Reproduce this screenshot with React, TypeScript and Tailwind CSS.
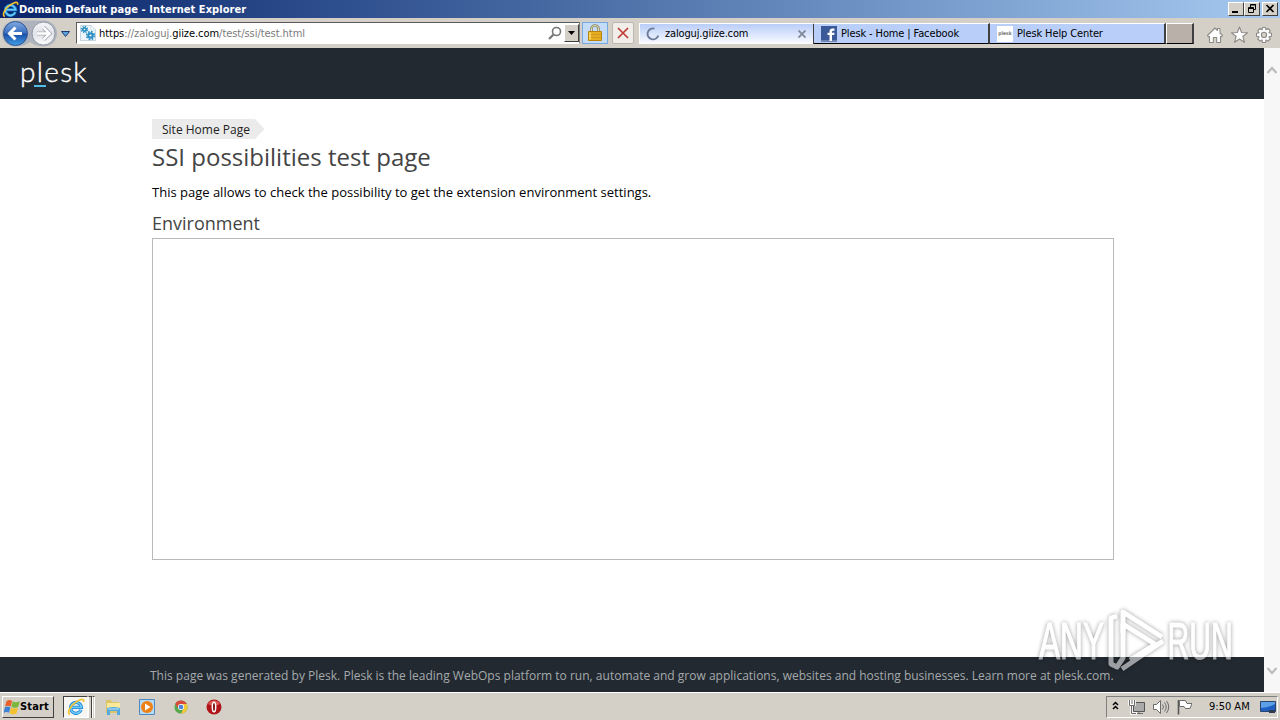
import type { ReactNode } from "react";

const TAHOMA = "font-['DejaVu_Sans_Condensed','DejaVu_Sans',sans-serif]";

function IeLogo({ className }: { className: string }) {
  return (
    <svg viewBox="0 0 20 20" className={className} aria-hidden>
      <path
        d="M15.6 13.2A6 6 0 1 1 16 10.4H5.2"
        fill="none"
        stroke="#1b86d8"
        strokeWidth="3.6"
      />
      <path
        d="M15.6 13.2A6 6 0 1 1 16 10.4H5.2"
        fill="none"
        stroke="#6cc8f5"
        strokeWidth="1.8"
      />
      <path
        d="M3.4 18.2C-.5 17 3 9.500 9 5.200S19.500 .2 18.300 4.600"
        fill="none"
        stroke="#f2c230"
        strokeWidth="1.9"
      />
    </svg>
  );
}

function NavButtons() {
  return (
    <svg width="76" height="30" viewBox="0 18 76 30" className="shrink-0" aria-hidden>
      <defs>
        <linearGradient id="back" x1="0" y1="0" x2="0" y2="1">
          <stop offset="0" stopColor="#7fa9e0" />
          <stop offset=".48" stopColor="#3a70c0" />
          <stop offset=".52" stopColor="#1c4fa8" />
          <stop offset="1" stopColor="#3f9fe8" />
        </linearGradient>
        <linearGradient id="forward" x1="0" y1="0" x2="0" y2="1">
          <stop offset="0" stopColor="#f6f7f9" />
          <stop offset=".5" stopColor="#dfe2e8" />
          <stop offset="1" stopColor="#fbfcfd" />
        </linearGradient>
      </defs>
      <path d="M15 20.500H44A13 13 0 0 1 44 46.500Q36 46.500 30 42Q24 46.500 15 46.500A13 13 0 0 1 15 20.500Z" fill="#aeb3bd" />
      <circle cx="15.500" cy="33.500" r="12" fill="url(#back)" stroke="#34568f" />
      <circle cx="43.500" cy="33.500" r="11.500" fill="url(#forward)" stroke="#9298a3" />
      <path
        d="M22 33.500H10M15.500 27.500L9.500 33.500L15.500 39.500"
        fill="none"
        stroke="#fff"
        strokeWidth="3"
      />
      <path
        d="M37 33.500H49M43.500 27.500L49.500 33.500L43.500 39.500"
        fill="none"
        stroke="#a9adb5"
        strokeWidth="4"
      />
      <path
        d="M37 33.500H48.500M43.500 27.500L49.500 33.500L43.500 39.500"
        fill="none"
        stroke="#fff"
        strokeWidth="2.400"
      />
      <path d="M61.500 31.500H69.500L65.500 36.500Z" fill="#5ba3dd" stroke="#1d3c70" />
    </svg>
  );
}

function GearsIcon() {
  return (
    <svg width="16" height="16" viewBox="0 0 16 16" className="shrink-0" aria-hidden>
      <path d="M.5 .5H11L15.500 5V15.500H.5Z" fill="#eef6fc" stroke="#c5d5e2" />
      <path d="M11 .5V5H15.500Z" fill="#fff" stroke="#c5d5e2" strokeWidth=".7" />
      <g fill="none" stroke="#2d8fc4">
        <circle cx="4.500" cy="4.500" r="1.700" strokeWidth="1.800" />
        <circle cx="4.500" cy="4.500" r="3" strokeWidth="1.400" strokeDasharray="1.3 1.056" />
        <circle cx="10.500" cy="10.500" r="2.200" strokeWidth="2.200" />
        <circle cx="10.500" cy="10.500" r="3.900" strokeWidth="1.600" strokeDasharray="1.700 1.363" />
      </g>
    </svg>
  );
}

function LockIcon() {
  return (
    <svg width="14" height="17" viewBox="0 0 14 17" aria-hidden>
      <path d="M3.500 8V4.500A3.500 3 0 0 1 10.500 4.500V8" fill="none" stroke="#8a8458" strokeWidth="2.600" />
      <path d="M3.500 8V4.500A3.500 3 0 0 1 10.500 4.500V8" fill="none" stroke="#e6e2c4" />
      <path d="M.5 7.500H13.500V16.500H.5Z" fill="#e7ae22" stroke="#b8840f" />
      <path d="M1 10.500H13M1 13.500H13" stroke="#cf9a1b" />
      <path d="M2 8.500V15.500" stroke="#ffdf70" strokeWidth="1.500" />
    </svg>
  );
}

function FacebookIcon() {
  return (
    <svg width="16" height="16" viewBox="0 0 16 16" className="shrink-0" aria-hidden>
      <path d="M0 0H16V16H0Z" fill="#3b5998" />
      <path d="M0 14H16V16H0Z" fill="#6d84b4" />
      <path
        d="M8.500 15V9H6.500V6.800H8.500V5.500Q8.500 2.500 11.500 2.500H13.500V4.800H12.200Q11 4.800 11 6V6.800H13.500L13.200 9H11V15Z"
        fill="#fff"
      />
    </svg>
  );
}

function CommandIcons() {
  return (
    <svg width="68" height="20" viewBox="1206 25 68 20" className="shrink-0" aria-hidden>
      <g fill="#fff" stroke="#8c8a86" strokeWidth="1.100" strokeLinejoin="round">
        <path d="M1207.500 35.500L1215 28L1217.500 30.500V28.500H1220V33L1222.500 35.500L1221 37L1220.500 36.500V42.500H1216.700V37.500H1213.300V42.500H1209.500V36.500L1209 37Z" />
        <path d="M1239.500 27L1241.600 32.500L1247.500 32.800L1242.900 36.500L1244.500 42.300L1239.500 39L1234.500 42.300L1236.100 36.500L1231.500 32.800L1237.400 32.500Z" />
        <path d="M1262.500 27.500H1265.500L1266 29.800L1268 28.500L1270.200 30.700L1268.900 32.700L1271.500 33.300V36.300L1268.900 36.900L1270.200 39L1268 41.200L1266 39.900L1265.500 42.500H1262.500L1262 39.900L1260 41.200L1257.800 39L1259.100 36.900L1256.500 36.300V33.300L1259.100 32.700L1257.800 30.700L1260 28.500L1262 29.800Z" />
        <circle cx="1264" cy="34.900" r="2.600" fill="#d4d0c8" />
      </g>
    </svg>
  );
}

function CaptionButton({ children }: { children: ReactNode }) {
  return (
    <div className="h-[14px] w-4 border border-t-white border-r-[#404040] border-b-[#404040] border-l-white bg-[#d4d0c8]">
      <svg width="14" height="12" viewBox="0 0 14 12" fill="none" stroke="#000" aria-hidden>
        {children}
      </svg>
    </div>
  );
}

function TitleBar() {
  return (
    <div className="flex h-[18px] items-center bg-linear-to-r from-[#0a246a] to-[#a6caf0] pr-0.5 pl-0.5">
      <IeLogo className="size-[17px] shrink-0" />
      <span className="pt-px text-[11px] leading-[17px] font-bold tracking-[0.06px] whitespace-nowrap text-white">
        Domain Default page - Internet Explorer
      </span>
      <div className="ml-auto flex">
        <CaptionButton>
          <path d="M3 9H9" strokeWidth="2" />
        </CaptionButton>
        <CaptionButton>
          <path d="M5.500 4V1.500H10.500V6.500H8.500M5 2H11" />
          <path d="M3.500 4.500H8.500V9.500H3.500ZM3 5.500H9" />
        </CaptionButton>
        <div className="ml-0.5">
          <CaptionButton>
            <path d="M3.500 2L10.500 9M10.500 2L3.500 9" strokeWidth="1.700" />
          </CaptionButton>
        </div>
      </div>
    </div>
  );
}

function AddressBar() {
  return (
    <div className="mt-1 flex h-[22px] w-[504px] shrink-0 items-center border border-t-[#5b5b5b] border-r-[#808080] border-b-white border-l-[#5b5b5b] bg-white pl-[3px]">
      <GearsIcon />
      <span className="ml-[3px] pt-[2px] text-[11px] tracking-[-0.05px] whitespace-nowrap text-[#7b7b7b]">
        <span className="text-black">https</span>://zaloguj.<span className="text-black">giize.com</span>/test/ssi/test.html
      </span>
      <svg width="14" height="15" viewBox="0 0 14 15" className="ml-auto" fill="none" stroke="#777" aria-hidden>
        <circle cx="8.500" cy="5.500" r="4" strokeWidth="1.600" />
        <path d="M5.500 8.500L1 13" strokeWidth="2.200" />
      </svg>
      <div className="ml-[2px] flex h-[18px] w-[15px] items-center justify-center border border-t-white border-r-[#404040] border-b-[#404040] border-l-white bg-[#d4d0c8]">
        <svg width="7" height="4" viewBox="0 0 7 4" aria-hidden>
          <path d="M0 0H7L3.500 4Z" />
        </svg>
      </div>
    </div>
  );
}

function Tab({ icon, label }: { icon: ReactNode; label: string }) {
  return (
    <div className="flex h-[21px] w-[176px] shrink-0 items-center border-t border-r-2 border-b border-t-white border-r-[#404040] border-b-black bg-[#b9cffa] pl-[7px]">
      {icon}
      <span className="ml-1 pt-px text-[11px] tracking-[-0.12px] whitespace-nowrap text-black">{label}</span>
    </div>
  );
}

function Toolbar() {
  return (
    <div className="flex h-[30px] items-start bg-[#d4d0c8]">
      <NavButtons />
      <AddressBar />
      <div className="mt-1 ml-[2px] flex h-[22px] w-[26px] shrink-0 items-center justify-center border border-[#76a9e2] bg-[#c4dcf8] pb-px">
        <LockIcon />
      </div>
      <div className="mt-1 ml-1 flex h-[22px] w-[22px] shrink-0 items-center justify-center rounded-[2px] border border-[#bcb8b1] bg-[#f1eeea]">
        <svg width="12" height="12" viewBox="0 0 12 12" fill="none" stroke="#bf3d35" strokeWidth="1.700" aria-hidden>
          <path d="M1 1L11 11M11 1L1 11" />
        </svg>
      </div>
      <div className="mt-[5px] ml-[5px] flex h-[21px] w-[176px] shrink-0 items-center border-t border-r-2 border-l border-t-white border-r-[#404040] border-l-white bg-linear-to-b from-[#b9cdf8] to-[#fbfcff] pl-[6px]">
        <svg width="14" height="14" viewBox="0 0 14 14" fill="none" aria-hidden>
          <path d="M8.500 1.600A5.500 5.500 0 1 0 12.300 8.500" stroke="#6f7d9c" strokeWidth="1.900" />
        </svg>
        <span className="ml-[5px] pt-px text-[11px] tracking-[-0.15px] text-black">zaloguj.giize.com</span>
        <svg width="8" height="8" viewBox="0 0 8 8" className="mr-[7px] ml-auto" stroke="#818898" strokeWidth="1.800" aria-hidden>
          <path d="M.5 .5L7.500 7.500M7.500 .5L.5 7.500" />
        </svg>
      </div>
      <div className="-ml-px flex pt-[5px]">
        <Tab icon={<FacebookIcon />} label="Plesk - Home | Facebook" />
        <Tab
          icon={
            <span className="flex size-4 items-center justify-center bg-white text-[5px] font-bold text-[#777]">plesk</span>
          }
          label="Plesk Help Center"
        />
        <div className="h-[21px] w-[28px] border border-r-2 border-t-white border-r-[#404040] border-b-black border-l-white bg-[#b9b1a9]" />
      </div>
      <div className="mt-[7px] mr-[6px] ml-auto">
        <CommandIcons />
      </div>
    </div>
  );
}

function Scrollbar() {
  return (
    <div className="flex w-4 shrink-0 flex-col items-center justify-between bg-[#f7f7f7] pt-[18px] pb-[17px]">
      <svg width="12" height="8" viewBox="0 0 12 8" fill="none" stroke="#bcbcbc" strokeWidth="2.200" aria-hidden>
        <path d="M1.500 7L6 2L10.500 7" />
      </svg>
      <svg width="12" height="8" viewBox="0 0 12 8" fill="none" stroke="#bcbcbc" strokeWidth="2.200" aria-hidden>
        <path d="M1.500 1L6 6L10.500 1" />
      </svg>
    </div>
  );
}

function PleskPage() {
  return (
    <div className="flex min-w-0 flex-1 flex-col bg-white font-['Open_Sans',sans-serif]">
      <header className="h-[51px] bg-[#222930] pt-[7px] pl-[20px] text-white">
        <div className="w-fit font-['Lato',sans-serif] text-[28px] leading-[32px] font-light tracking-[1.3px] [-webkit-text-stroke:0.4px_#fff]">
          plesk
        </div>
        <div className="-mt-[2px] ml-[14px] h-[2px] w-3 bg-[#53bce6]" />
      </header>
      <main className="ml-[152px] flex w-[962px] flex-1 flex-col items-start pt-5">
        <div className="flex h-5">
          <span className="bg-[#ebebeb] pr-[5px] pl-[10px] text-[12px] leading-[21px] text-[#222]">Site Home Page</span>
          <svg width="10" height="20" viewBox="0 0 10 20" aria-hidden>
            <path d="M0 0L9.500 10L0 20Z" fill="#ebebeb" />
          </svg>
        </div>
        <h1 className="mt-[2px] text-[24px] leading-[32px] whitespace-nowrap text-[#444]">SSI possibilities test page</h1>
        <p className="mt-[9px] text-[13px] leading-5 whitespace-nowrap text-black">
          This page allows to check the possibility to get the extension environment settings.
        </p>
        <h2 className="mt-[9px] text-[18px] leading-6 text-[#444]">Environment</h2>
        <div className="mt-[3px] h-[322px] w-full border border-[#b9b9b9]" />
      </main>
      <footer className="flex h-[35px] items-center bg-[#222930] pb-px pl-[150px] text-[12px] tracking-[0.007px] whitespace-nowrap text-[#a5a9ad]">
        <span className="mt-1">
          This page was generated by Plesk. Plesk is the leading WebOps platform to run, automate and grow applications,
          websites and hosting businesses. Learn more at plesk.com.
        </span>
      </footer>
    </div>
  );
}

function Watermark() {
  return (
    <svg
      width="220"
      height="80"
      viewBox="1030 600 220 80"
      className="absolute top-[552px] left-[1030px] overflow-visible opacity-55 drop-shadow-[0_0_2px_rgba(0,0,0,0.7)]"
      aria-hidden
    >
      <g fill="#fff" stroke="#fff" strokeWidth="1.2" fontFamily="'Liberation Sans', sans-serif" fontSize="51">
        <text transform="translate(1039 658.5) scale(.62 1)">ANY</text>
        <text transform="translate(1167.5 658.5) scale(.59 1)">RUN</text>
      </g>
      <g fill="none" stroke="#fff" strokeWidth="5" strokeLinejoin="round">
        <path d="M1123 633V612L1162 637" />
        <path d="M1117 616L1111 618V664L1117 667L1123 658V624L1158 646" />
        <path d="M1122 669L1163 641" />
        <path d="M1130 660L1154 645" />
      </g>
    </svg>
  );
}

function StartFlag() {
  return (
    <svg width="16" height="16" viewBox="0 0 15 15" className="shrink-0" aria-hidden>
      <path d="M2.300 2Q5 0 7.700 1.800L6.300 7Q4 5.500 1 7Z" fill="#e9602c" />
      <path d="M8.300 2.200Q11 4 14.800 2L13.300 7.500Q10 9 6.900 7.300Z" fill="#78b83c" />
      <path d="M.8 7.700Q3.500 6.200 6.100 7.700L4.700 13Q2.500 11.500 -.3 13Z" fill="#3e83d3" />
      <path d="M6.700 8Q9.500 9.700 13.100 8.200L11.700 13.500Q8.500 15.200 5.300 13.300Z" fill="#f3c12d" />
    </svg>
  );
}

function QuickLaunch() {
  return (
    <div className="ml-[9px] flex items-center">
      <div className="flex h-[22px] w-[25px] items-center justify-center border border-t-[#404040] border-r-white border-b-white border-l-[#404040] bg-[#f7f6f3]">
        <IeLogo className="size-[18px]" />
      </div>
      <div className="h-[22px] w-[4px] border-t border-r border-l border-t-[#404040] border-r-[#404040] border-l-white" />
      <div className="h-[22px] w-[3px] border-t border-r border-l border-t-[#404040] border-r-white border-l-white" />
      <svg width="16" height="16" viewBox="0 0 16 16" className="ml-[10px]" aria-hidden>
        <path d="M1 1H6L7 3H14V14H1Z" fill="#ddc468" />
        <path d="M2 4H15V11H2Z" fill="#fbe99a" />
        <path d="M2 16V9Q8 7 15 9V16H12V12H5V16Z" fill="#55a9de" />
        <path d="M3 10H14" stroke="#bfe4fa" />
      </svg>
      <svg width="16" height="16" viewBox="0 0 16 16" className="ml-[18px]" aria-hidden>
        <path d="M.5 .5H15.500V15.500H.5Z" fill="#b9d8f1" stroke="#4c8ac3" />
        <circle cx="8" cy="8" r="6" fill="#ee8115" />
        <path d="M6 4.500L11.500 8L6 11.500Z" fill="#fff" />
      </svg>
      <svg width="14" height="14" viewBox="0 0 16 16" className="ml-[19px]" aria-hidden>
        <circle cx="8" cy="8" r="7.500" fill="#57a74c" />
        <path d="M1.500 4.200A7.500 7.500 0 0 1 14.600 4.500H8L4.500 9.500Z" fill="#d8483b" />
        <path d="M8 4.500H14.600A7.500 7.500 0 0 1 8 15.500L11.200 9.500Z" fill="#f2c83a" />
        <circle cx="8" cy="8" r="3.500" fill="#fff" />
        <circle cx="8" cy="8" r="2.700" fill="#4a82dc" />
      </svg>
      <svg width="16" height="16" viewBox="0 0 16 16" className="ml-[18px]" aria-hidden>
        <circle cx="8" cy="8" r="7.500" fill="#b01318" />
        <path d="M2 5A7 7 0 0 1 14 5Q8 8 2 5Z" fill="#dd5b57" />
        <ellipse cx="8" cy="8" rx="1.700" ry="4.800" fill="#7d080c" stroke="#fff" strokeWidth="1.500" />
      </svg>
    </div>
  );
}

function Tray() {
  return (
    <div className="flex h-[22px] w-[172px] items-center border border-t-[#808080] border-r-white border-b-white border-l-[#808080]">
      <svg width="80" height="18" viewBox="1112 698 80 18" className="ml-[5px]" fill="none" aria-hidden>
        <path
          d="M1113 705L1115.500 702.500L1118 705M1113 709L1115.500 706.500L1118 709"
          stroke="#000"
          strokeWidth="1.500"
        />
        <g stroke="#6b6b6b">
          <path d="M1133.500 702.500H1144.500V711.500H1133.500Z" fill="#aaa" stroke="#555" />
          <path d="M1136 713.500H1143M1139 711V714" />
          <path
            d="M1129.500 700V704.500H1131.500V713.500H1137M1129.500 704.500H1134.500V700M1132 700V704"
            stroke="#fff"
            strokeWidth="2.500"
          />
          <path d="M1129.500 700V705.500H1134.500V700M1131.500 705.500V713.500H1136M1132 700V704" />
          <path d="M1153.500 704.500H1156.500L1160.500 700.500V713.500L1156.500 709.500H1153.500Z" fill="#fff" />
          <path d="M1162.500 704.500Q1164.500 707 1162.500 709.500M1164.500 702.500Q1168 707 1164.500 711.500M1166.500 701Q1171 707 1166.500 713" />
          <path d="M1178.500 700V714.500" stroke="#555" strokeWidth="1.600" />
          <path d="M1179.500 700.500H1185.500L1187 703.500H1192L1190 708.500H1185.500L1184 706.500H1179.500Z" fill="#fff" />
        </g>
      </svg>
      <span className="ml-[17px] pt-px text-[11px] whitespace-nowrap text-black">9:50 AM</span>
      <svg width="16" height="14" viewBox="0 0 16 14" className="mr-px ml-auto" aria-hidden>
        <path d="M.5 1.500H15.500V11.500H.5Z" fill="#1f5fc0" stroke="#2b4470" />
        <path d="M1 2H15V4Q8 8 1 8Z" fill="#5da0e8" />
        <path d="M9 10H15V13H9Z" fill="#303b4e" />
      </svg>
    </div>
  );
}

function Taskbar() {
  return (
    <div className="flex h-7 items-center bg-[#d4d0c8] pt-px pr-[2px] pl-[2px] shadow-[inset_0_1px_0_#fff]">
      <div className="flex h-[22px] w-[52px] items-center border border-t-white border-r-[#404040] border-b-[#404040] border-l-white pl-px">
        <StartFlag />
        <span className="pt-[2px] text-[11px] font-bold tracking-[0.15px] text-black">Start</span>
      </div>
      <QuickLaunch />
      <div className="mt-px ml-auto">
        <Tray />
      </div>
    </div>
  );
}

export default function App() {
  return (
    <div className={`flex h-[720px] w-[1280px] flex-col overflow-hidden ${TAHOMA}`}>
      <TitleBar />
      <Toolbar />
      <div className="relative flex min-h-0 flex-1">
        <PleskPage />
        <Scrollbar />
        <Watermark />
      </div>
      <Taskbar />
    </div>
  );
}
